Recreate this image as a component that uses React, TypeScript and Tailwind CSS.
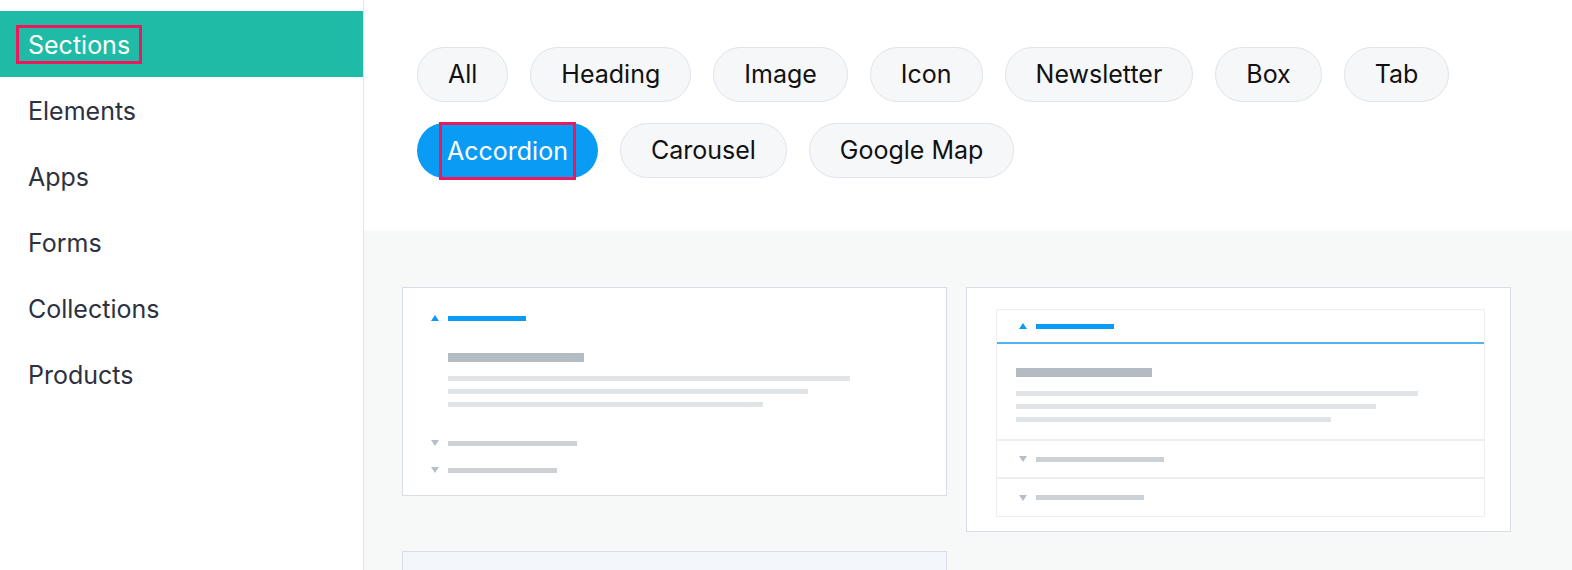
import React from 'react';

const navItems = ['Sections', 'Elements', 'Apps', 'Forms', 'Collections', 'Products'];

const pillRows = [
  ['All', 'Heading', 'Image', 'Icon', 'Newsletter', 'Box', 'Tab'],
  ['Accordion', 'Carousel', 'Google Map'],
];

const TriUp = ({ className }: { className: string }) => (
  <svg width="8" height="6" viewBox="0 0 8 6" className={className}>
    <path d="M4 0 L8 6 L0 6 Z" fill="currentColor" />
  </svg>
);

const TriDown = ({ className }: { className: string }) => (
  <svg width="8" height="6" viewBox="0 0 8 6" className={className}>
    <path d="M0 0 L8 0 L4 6 Z" fill="currentColor" />
  </svg>
);

const BodyLines = () => (
  <div className="flex flex-col">
    <div className="h-[9px] w-[136px] bg-[#b3bcc3]" />
    <div className="mt-[14px] h-[5px] w-[402px] bg-[#e1e4e7]" />
    <div className="mt-[8px] h-[5px] w-[360px] bg-[#e1e4e7]" />
    <div className="mt-[8px] h-[5px] w-[315px] bg-[#e1e4e7]" />
  </div>
);

const PreviewPlain = () => (
  <div className="w-[545px] h-[209px] bg-white border border-[#d8dde6] pl-[28px] pt-[27px]">
    <div className="flex items-center gap-[9px]">
      <TriUp className="text-[#0a9cf5]" />
      <div className="h-[5px] w-[78px] bg-[#0a9cf5]" />
    </div>
    <div className="mt-[32px] ml-[17px]">
      <BodyLines />
    </div>
    <div className="mt-[33px] flex items-center gap-[9px]">
      <TriDown className="text-[#b7bec5]" />
      <div className="h-[5px] w-[129px] bg-[#ccd1d6]" />
    </div>
    <div className="mt-[21px] flex items-center gap-[9px]">
      <TriDown className="text-[#b7bec5]" />
      <div className="h-[5px] w-[109px] bg-[#ccd1d6]" />
    </div>
  </div>
);

const PreviewBoxed = () => (
  <div className="w-[545px] h-[245px] bg-white border border-[#d8dde6] pt-[21px] pl-[29px]">
    <div className="w-[489px] border border-[#eceef0]">
      <div className="h-[34px] flex items-center gap-[9px] pl-[22px] border-b-2 border-[#4fb4f7]">
        <TriUp className="text-[#0a9cf5]" />
        <div className="h-[5px] w-[78px] bg-[#0a9cf5]" />
      </div>
      <div className="pl-[19px] pt-[24px] pb-[17px] border-b-2 border-[#eceef0]">
        <BodyLines />
      </div>
      <div className="h-[38px] flex items-center gap-[9px] pl-[22px] border-b-2 border-[#eceef0]">
        <TriDown className="text-[#b7bec5]" />
        <div className="h-[5px] w-[128px] bg-[#ccd1d6]" />
      </div>
      <div className="h-[37px] flex items-center gap-[9px] pl-[22px]">
        <TriDown className="text-[#b7bec5]" />
        <div className="h-[5px] w-[108px] bg-[#ccd1d6]" />
      </div>
    </div>
  </div>
);

export default function App() {
  return (
    <div className="flex w-[1572px] h-[570px] overflow-hidden bg-white font-['Inter',sans-serif]">
      {/* Sidebar */}
      <aside className="w-[364px] shrink-0 border-r border-[#e3e6ea] pt-[11px]">
        {navItems.map((item, i) =>
          i === 0 ? (
            <div key={item} className="h-[66px] flex items-center pl-[16px] bg-[#20bba6]">
              <span className="border-[3px] border-[#f0185c] px-[9px] pt-[2px] pb-[1px] text-[25px] leading-[30px] text-white">
                {item}
              </span>
            </div>
          ) : (
            <div key={item} className="h-[66px] flex items-center pl-[28px] pt-[3px] text-[25px] text-[#2d3140]">
              {item}
            </div>
          )
        )}
      </aside>

      {/* Main */}
      <main className="flex-1 flex flex-col">
        <div className="h-[231px] shrink-0 bg-white pt-[47px] pl-[53px] flex flex-col gap-[21px]">
          {pillRows.map((row, r) => (
            <div key={r} className="flex gap-[22px]">
              {row.map((p) =>
                p === 'Accordion' ? (
                  <div
                    key={p}
                    className="h-[55px] rounded-full bg-[#0a9cf5] px-[22px] flex items-center text-[25px] text-white"
                  >
                    <span className="border-[3px] border-[#f0185c] px-[5px] leading-[52px]">{p}</span>
                  </div>
                ) : (
                  <div
                    key={p}
                    className="h-[55px] rounded-full bg-[#f6f7f8] border border-[#dfe3ea] px-[30px] pt-[1px] flex items-center text-[25px] text-[#111111]"
                  >
                    {p}
                  </div>
                )
              )}
            </div>
          ))}
        </div>
        <div className="flex-1 bg-[#f7f8f8] pt-[56px] pl-[38px]">
          <div className="grid grid-cols-[545px_545px] gap-x-[19px] gap-y-[19px] items-start">
            <PreviewPlain />
            <PreviewBoxed />
            <div className="w-[545px] h-[120px] bg-[#f3f6fa] border border-[#d8dde6]" />
          </div>
        </div>
      </main>
    </div>
  );
}
